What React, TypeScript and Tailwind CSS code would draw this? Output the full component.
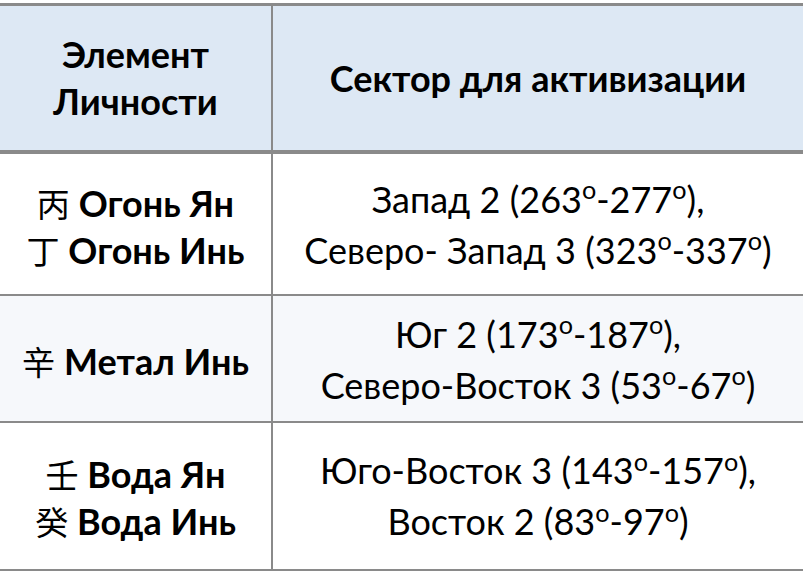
import React from "react";

const D = () => <span className="relative -top-[0.52em] text-[0.7em]">o</span>;

const cjk = "font-['Noto_Sans_CJK_SC',sans-serif] font-normal text-[0.92em]";

export default function App() {
  return (
    <div className="w-[805px] h-[574px] bg-white pt-[3px] pr-[2px] font-['Lato','Liberation_Sans',sans-serif] text-black">
      <div className="border-t-[3px] border-[#8a8a8a] grid grid-cols-[273px_1fr]">
        {/* header */}
        <div className="h-[144px] bg-[#dde8f4] border-r-2 border-[#8a8a8a] flex items-center justify-center text-center font-bold text-[36px] leading-[47px]">
          <div>Элемент<br />Личности</div>
        </div>
        <div className="h-[144px] bg-[#dde8f4] flex items-center justify-center text-center font-bold text-[36px] leading-[47px]">
          Сектор для активизации
        </div>
        <div className="col-span-2 h-[4px] bg-[#8a8a8a]" />

        {/* row 1 */}
        <div className="h-[142px] pt-[5px] border-r-2 border-[#8a8a8a] border-b-2 flex items-center justify-center text-center text-[36px] leading-[47px] font-bold">
          <div>
            <div><span className={cjk}>丙</span> Огонь Ян</div>
            <div><span className={cjk}>丁</span> Огонь Инь</div>
          </div>
        </div>
        <div className="h-[142px] pt-[5px] border-b-2 border-[#8a8a8a] flex items-center justify-center text-center text-[36px] leading-[47px]">
          <div>
            <div>Запад 2 (263<D />-277<D />),</div>
            <div>Северо- Запад 3 (323<D />-337<D />)</div>
          </div>
        </div>

        {/* row 2 */}
        <div className="h-[127px] pt-[6px] bg-[#f6f8fb] border-r-2 border-b-2 border-[#8a8a8a] flex items-center justify-center text-center text-[36px] leading-[47px] font-bold">
          <div><span className={cjk}>辛</span> Метал Инь</div>
        </div>
        <div className="h-[127px] pt-[6px] bg-[#f6f8fb] border-b-2 border-[#8a8a8a] flex items-center justify-center text-center text-[36px] leading-[47px]">
          <div>
            <div>Юг 2 (173<D />-187<D />),</div>
            <div>Северо-Восток 3 (53<D />-67<D />)</div>
          </div>
        </div>

        {/* row 3 */}
        <div className="h-[148px] pt-[4px] border-r-2 border-b-2 border-[#8a8a8a] flex items-center justify-center text-center text-[36px] leading-[47px] font-bold">
          <div>
            <div><span className={cjk}>壬</span> Вода Ян</div>
            <div><span className={cjk}>癸</span> Вода Инь</div>
          </div>
        </div>
        <div className="h-[148px] pt-[4px] border-b-2 border-[#8a8a8a] flex items-center justify-center text-center text-[36px] leading-[47px]">
          <div>
            <div>Юго-Восток 3 (143<D />-157<D />),</div>
            <div>Восток 2 (83<D />-97<D />)</div>
          </div>
        </div>
      </div>
    </div>
  );
}
